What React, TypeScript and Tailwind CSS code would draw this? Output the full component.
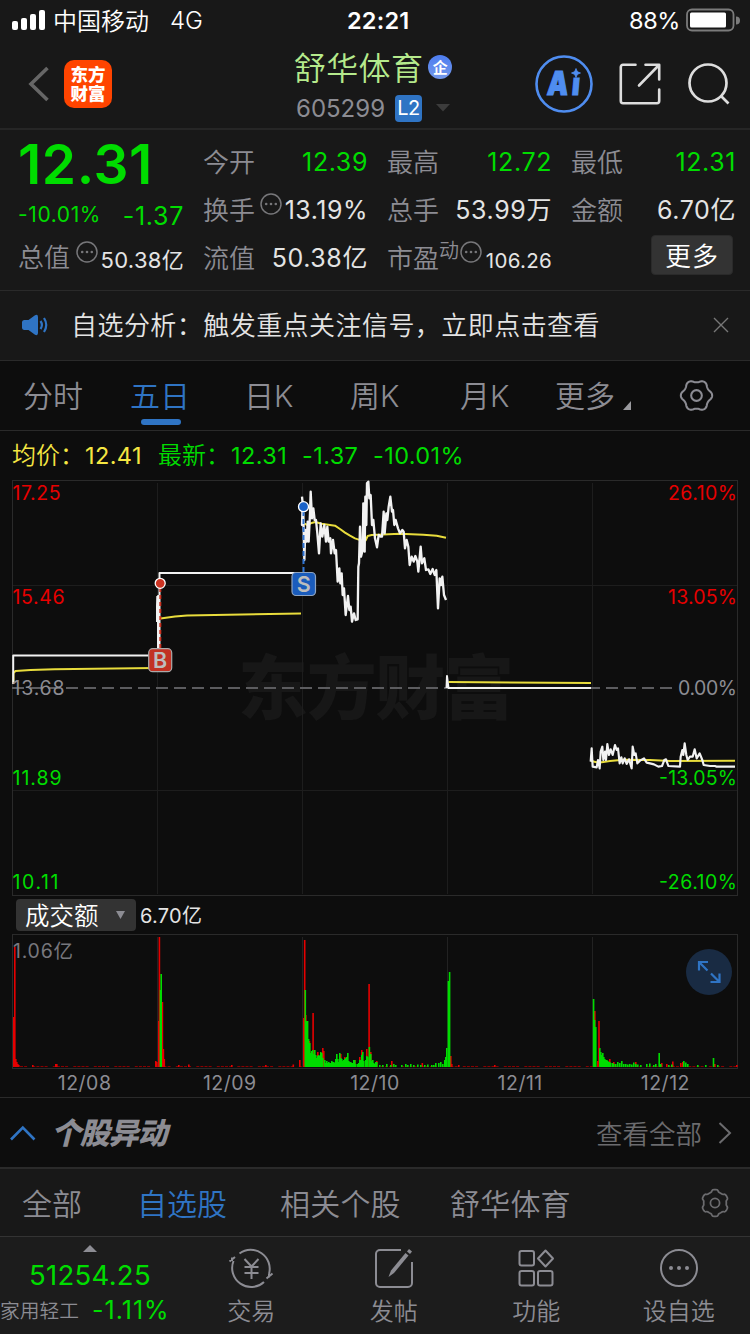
import React from "react";

const DATES = ["12/08", "12/09", "12/10", "12/11", "12/12"];

const DAY3_PRICE =
  "36,80 38,100 36,165 40,130 43,270 46,180 50,215 53,155 56,215 60,130 62,65 66,145 70,115 74,150 78,150 82,190 87,250 92,160 97,200 103,165 108,215 112,170 116,215 121,205 123,250 129,210 134,250 138,240 143,335 148,295 151,340 155,310 158,375 162,355 167,435 174,378 178,420 182,410 186,455 192,430 197,450 203,448 205,290 207,280 210,170 213,260 218,240 220,100 224,245 226,80 229,165 231,40 235,35 238,85 242,75 246,165 250,150 255,205 261,232 266,195 272,200 276,200 281,125 284,190 289,130 292,150 296,110 301,80 306,125 309,120 313,165 317,150 324,175 330,190 337,180 341,185 345,235 350,210 355,230 359,285 365,260 371,275 376,258 382,275 385,305 392,230 396,280 403,265 408,300 415,298 421,312 428,297 434,315 439,300 444,415 449,325 453,345 457,320 462,375 468,390";
const DAY3_AVG =
  "38,140 42,160 52,165 62,160 76,156 95,161 135,167 150,177 165,188 180,197 195,205 215,212 227,211 233,198 245,195 330,191 400,194 440,197 468,203";
const DAY5_PRICE =
  "422,365 425,325 428,380 440,382 444,360 449,385 452,335 457,320 460,360 465,335 468,360 472,312 477,345 482,328 488,345 495,315 500,330 504,325 509,370 514,352 518,370 524,355 530,372 537,358 545,385 548,320 553,345 557,340 562,370 570,362 582,355 590,368 600,370 612,373 625,380 636,378 643,360 648,358 655,378 690,380 692,350 697,330 700,345 704,310 709,345 713,360 720,350 728,350 734,328 740,355 749,340 757,360 761,375 780,378 795,378 800,380 855,380";
const DAY5_AVG = "422,362 445,368 480,363 520,359 600,360 660,363 855,362";

// [x, height] pairs, measured from the volume baseline.
const RED_BARS: number[][] = [
  [13, 50], [14, 120], [15, 8], [16, 5], [17, 3], [18, 2], [32, 2], [55, 3], [56, 3], [155, 6], [156, 5],
  [158, 46], [158.6, 130], [161.6, 65], [162.6, 18], [163.5, 8], [178, 2], [188, 2.5], [231, 2], [265, 2],
  [292.5, 2.5], [299, 7], [303, 49], [303.9, 127], [305, 52], [308.6, 26], [312.3, 54], [317, 15], [322, 19],
  [323, 16], [340, 13], [344, 10], [354, 7], [359, 10], [361, 17], [366, 18], [368.3, 83], [370, 15],
  [376, 6], [391, 6], [421.5, 4], [450, 11], [451, 3], [458, 2], [494, 2], [594, 56], [597, 6], [598.2, 46],
  [609, 8], [613, 5], [635, 5], [661, 4], [666, 3], [672, 5.5], [680, 4], [682, 5], [714, 3], [736, 2],
];
const GREEN_BARS: number[][] = [
  [160.4, 93], [159.6, 77], [304.5, 77], [305.8, 46], [306.8, 46], [307.8, 28], [309, 24], [310, 14], [311, 16],
  [312, 17], [313, 13], [314, 17], [315, 12], [316, 9], [317, 11], [318, 12], [319, 11], [320, 15], [321, 14],
  [322, 9], [324, 7], [325, 4], [326, 6], [327, 4], [328, 5], [329, 4], [330, 4], [331, 6], [332, 5], [333, 5],
  [334, 4], [335, 8], [336, 13], [337, 8], [338, 5], [339, 14], [340, 9], [341, 8], [342, 6], [343, 7], [344, 8],
  [345, 9], [346, 10], [347, 14], [348, 6], [349, 5], [350, 5], [351, 4], [352, 4], [353, 7], [354, 7], [355, 3],
  [357, 3], [358, 4], [359, 7], [360, 7], [361, 12], [362, 15], [363, 6], [365, 7], [366, 11], [367, 10],
  [368.6, 20], [370, 13], [371, 6], [372, 7], [373, 4], [374, 3], [375, 5], [376, 5], [379, 2], [382, 2],
  [386, 3], [390, 2], [393, 3], [395, 2], [401, 2], [405, 3], [407, 2], [410, 3], [413, 2], [417, 2.5],
  [420, 2], [424, 2], [427, 2.5], [431, 2], [433, 2], [435, 4], [438, 4], [440, 5], [442, 3], [444, 7],
  [445, 10], [446, 19], [447.6, 86], [448.8, 95], [592.8, 68], [593.8, 47], [595, 40], [599, 19], [600, 15],
  [601, 12], [602, 14], [603, 10], [604, 8], [605, 7], [606, 7], [607, 6], [608, 5], [609, 5], [610, 4],
  [612, 4], [613, 3], [615, 3], [617, 5], [619, 4], [621, 6], [623, 3], [625, 3], [627, 2.5], [629, 3],
  [631, 2.5], [633, 4.5], [635, 3], [637, 2.5], [640, 2], [646, 3], [649, 3.5], [653, 2], [655, 3], [658.4, 14],
  [660, 3], [668, 2], [671, 2.5], [683, 6], [685, 4.5], [687, 3], [697, 2], [705, 2], [712.7, 9], [717, 2],
];

const DARK_TICKS = Array.from({ length: 175 }, (_, i) => 20 + i * 4.1).filter((_, i) => i % 5 !== 2);

// Six-lobed gear outline; a higher sharpness gives squarer teeth.
function gearPoints(radius: number, depth: number, sharpness: number) {
  return Array.from({ length: 144 }, (_, i) => {
    const a = (i / 144) * Math.PI * 2;
    const wave = Math.tanh(sharpness * Math.cos(6 * a)) / Math.tanh(sharpness);
    const r = radius + depth * wave;
    return `${(17 + r * Math.cos(a)).toFixed(2)},${(17 + r * Math.sin(a)).toFixed(2)}`;
  }).join(" ");
}

function Gear({ className, sharpness }: { className: string; sharpness: number }) {
  return (
    <svg className={className} viewBox="0 0 34 34" fill="none" stroke="currentColor" strokeWidth="2" strokeLinejoin="round">
      <polygon points={gearPoints(14, 1.2, sharpness)} />
      <circle cx="17" cy="17" r="5.200" />
    </svg>
  );
}

function Dots({ className }: { className: string }) {
  return (
    <svg className={className} viewBox="0 0 22 22" fill="none">
      <circle cx="11" cy="11" r="10" stroke="#77777a" strokeWidth="1.500" />
      <g fill="#77777a">
        <circle cx="6.200" cy="11" r="1.300" />
        <circle cx="11" cy="11" r="1.300" />
        <circle cx="15.800" cy="11" r="1.300" />
      </g>
    </svg>
  );
}

function StatusBar() {
  return (
    <div className="flex h-10 items-center pl-3 text-white">
      <svg className="h-5 w-[34px] shrink-0" viewBox="0 0 34 20" fill="#fff">
        <rect x="0" y="11" width="6" height="9" rx="2" />
        <rect x="9" y="8" width="6" height="12" rx="2" />
        <rect x="18" y="4" width="6" height="16" rx="2" />
        <rect x="27" y="0" width="6" height="20" rx="2" />
      </svg>
      <span className="mt-[3px] ml-[7px] w-[117px] text-[24px]">中国移动</span>
      <span className="mt-[2px] w-[177px] text-[24px]">4G</span>
      <span className="mt-[2px] w-[282px] text-[23.500px] font-semibold tracking-[0.200px]">22:21</span>
      <span className="mt-[2px] w-[57px] text-[23.500px] font-normal tracking-[-0.400px]">88%</span>
      <svg className="h-[24px] w-[54px] shrink-0" viewBox="0 0 54 24">
        <rect x="1" y="1.500" width="46.500" height="21" rx="5" fill="none" stroke="#7b7b7b" strokeWidth="1.800" />
        <rect x="4" y="4.500" width="36" height="15" rx="1.500" fill="#fff" />
        <path d="M50 8.500a4 4 0 0 1 0 8z" fill="#7b7b7b" />
      </svg>
    </div>
  );
}

function Header() {
  return (
    <header className="flex h-[90px] items-center border-b-2 border-[#262626] pl-[28px]">
      <svg className="h-9 w-[22px] shrink-0" viewBox="0 0 22 36" fill="none" stroke="#666" strokeWidth="3.600">
        <path d="M19.500 2 3 18l16.500 16" />
      </svg>
      <div className="ml-[14px] flex h-12 w-12 shrink-0 flex-col items-center justify-center rounded-[10px] bg-[#ff4400] text-[17.500px] leading-[19px] font-black text-white">
        <span>东方</span>
        <span>财富</span>
      </div>
      <div className="ml-[182px] flex w-[241px] flex-col pt-[6px]">
        <div className="flex h-[42px] items-center">
          <span className="mt-[2px] text-[32px] tracking-[0.300px] text-[#b5ea8c]">舒华体育</span>
          <span className="mb-[1px] ml-[5px] flex h-6 w-6 items-center justify-center rounded-full bg-gradient-to-b from-[#4d7df0] to-[#7397ea] text-[15px] font-bold text-white">企</span>
        </div>
        <div className="flex h-[39px] items-center">
          <span className="mt-[1px] ml-[2px] w-[99px] text-[24px] font-normal text-[#8c8c93]">605299</span>
          <span className="flex h-[27px] w-[27px] items-center justify-center rounded-[4px] bg-[#2f74c4] text-[20px] font-normal tracking-[-0.500px] text-white">L2</span>
          <svg className="ml-[14px] h-[8px] w-[14px]" viewBox="0 0 14 8" fill="#3c3c3c">
            <path d="M0 0h14L7 7.500z" />
          </svg>
        </div>
      </div>
      <svg className="h-[58px] w-[58px] shrink-0" viewBox="0 0 58 58">
        <g transform="translate(11.500 39.500) skewX(-5) scale(.8 1)">
          <text x="0 31" fontSize="33" fontWeight="900" fill="#4f8df0" stroke="#4f8df0" strokeWidth="1.200">Ai</text>
        </g>
        <path d="M34 10h13v12.500H34z" fill="#181818" />
        <circle cx="29" cy="29" r="27.500" fill="none" stroke="#4f8df0" strokeWidth="2.600" />
        <path d="M41 13.500c.9 2.800 1.700 3.700 4.500 4.500-2.800.9-3.600 1.700-4.500 4.500-.9-2.800-1.700-3.600-4.500-4.500 2.800-.8 3.600-1.700 4.500-4.500z" fill="#4f8df0" stroke="#4f8df0" strokeWidth=".8" />
      </svg>
      <svg className="ml-[26px] h-[42px] w-[42px] shrink-0" viewBox="0 0 42 42" fill="none" stroke="#ddd" strokeWidth="2.600" strokeLinecap="round" strokeLinejoin="round">
        <path d="M16.500 1.800H4A2.200 2.200 0 0 0 1.800 4v34A2.200 2.200 0 0 0 4 40.200h34a2.200 2.200 0 0 0 2.200-2.200V26.500M26.500 1.800h13.700v14.700M40 2 20 22.500" />
      </svg>
      <svg className="ml-[26px] h-[44px] w-[44px] shrink-0" viewBox="0 0 44 44" fill="none" stroke="#ddd" strokeWidth="2.700">
        <circle cx="21" cy="21" r="18.500" />
        <path d="m33.500 33.500 8 8" />
      </svg>
    </header>
  );
}

function Cell({ label, value, green }: { label: string; value: string; green?: boolean }) {
  return (
    <div className="flex h-12 items-center justify-between">
      <span className="mt-[3px] text-[26px] text-[#8c8c93]">{label}</span>
      <span className={green ? "mt-[2px] text-[25px] font-normal tracking-[0.600px] text-[#00dc00]" : "mt-[2px] text-[25px] font-normal tracking-[0.600px] text-[#e4e4e4]"}>{value}</span>
    </div>
  );
}

function Quote() {
  return (
    <section className="flex h-[161px] gap-[19px] border-b border-[#2a2a2a] pt-[7px] pl-[18px]">
      <div className="w-[166px]">
        <div className="flex h-[54px] items-center text-[55px] font-semibold tracking-[0.600px] text-[#00dc00]">12.31</div>
        <div className="flex h-[46px] items-center justify-between font-normal text-[#00dc00]">
          <span className="text-[21px] tracking-[0.600px]">-10.01%</span>
          <span className="mt-[5px] text-[25px] tracking-[0.700px]">-1.37</span>
        </div>
        <div className="flex h-[40px] items-center">
          <span className="mt-[1px] text-[26px] text-[#8c8c93]">总值</span>
          <Dots className="mb-[10px] ml-[6px] h-[22px] w-[22px] shrink-0" />
          <span className="mt-[5px] ml-auto text-[22px] font-normal tracking-[0.300px] text-[#e4e4e4]">50.38亿</span>
        </div>
      </div>
      <div className="w-[165px]">
        <Cell label="今开" value="12.39" green />
        <div className="flex h-12 items-center">
          <span className="mt-[3px] text-[26px] text-[#8c8c93]">换手</span>
          <Dots className="mb-[10px] ml-[5px] h-[22px] w-[22px] shrink-0" />
          <span className="mt-[2px] ml-auto text-[25px] font-normal tracking-[0.500px] text-[#e4e4e4]">13.19%</span>
        </div>
        <Cell label="流值" value="50.38亿" />
      </div>
      <div className="w-[165px]">
        <Cell label="最高" value="12.72" green />
        <Cell label="总手" value="53.99万" />
        <div className="flex h-12 items-center">
          <span className="mt-[3px] text-[26px] text-[#8c8c93]">市盈</span>
          <span className="mb-[12px] text-[20px] text-[#8c8c93]">动</span>
          <Dots className="mb-[10px] ml-[1px] h-[22px] w-[22px] shrink-0" />
          <span className="mt-[9px] ml-auto text-[20.500px] font-normal tracking-[0.300px] text-[#e4e4e4]">106.26</span>
        </div>
      </div>
      <div className="w-[165px]">
        <Cell label="最低" value="12.31" green />
        <Cell label="金额" value="6.70亿" />
        <button className="mt-[2px] mr-[3px] ml-auto flex h-[40px] w-[82px] items-center justify-center rounded-[4px] border border-[#2a2a2a] bg-[#333] pt-[3px] text-[26px] tracking-[1px] text-white">更多</button>
      </div>
    </section>
  );
}

function Notice() {
  return (
    <section className="flex h-[70px] items-center border-b border-[#2a2a2a] pl-[22px]">
      <svg className="mb-[1px] h-[22px] w-[28px] shrink-0" viewBox="0 0 28 22">
        <path d="M2 6h4.500L13 1.200Q16 0 16 3v16q0 3-3 1.800L6.500 16H2q-2-.3-2-2V8q0-1.700 2-2z" fill="#2f74c4" />
        <path d="M18.500 7q2.800 4 0 8M22 4q4.500 7 0 14" fill="none" stroke="#2f74c4" strokeWidth="2.200" />
      </svg>
      <span className="mt-[1px] ml-[21px] w-[642px] text-[26px] tracking-[0.450px] text-[#e4e4e4]">自选分析：触发重点关注信号，立即点击查看</span>
      <svg className="mb-[1px] h-[16px] w-[16px] shrink-0" viewBox="0 0 16 16" stroke="#777" strokeWidth="1.400">
        <path d="m1 1 14 14M15 1 1 15" />
      </svg>
    </section>
  );
}

function PeriodTabs() {
  return (
    <nav className="flex h-[70px] items-center border-b border-[#2a2a2a] pl-[23px] text-[30px] text-[#8c8c93]">
      <span className="w-[107px]">分时</span>
      <span className="relative w-[114px] text-[#2f74c4]">
        五日
        <i className="absolute top-[38px] left-[11px] h-[6px] w-10 rounded-full bg-[#2f74c4]" />
      </span>
      <span className="w-[106px]">日K</span>
      <span className="w-[110px]">周K</span>
      <span className="w-[95px]">月K</span>
      <span className="w-[68px]">更多</span>
      <svg className="mt-[20px] h-[9px] w-[8px]" viewBox="0 0 8 9" fill="#9a9a9e">
        <path d="M8 0v9H0z" />
      </svg>
      <Gear className="ml-[48px] h-[35px] w-[35px]" sharpness={0.9} />
    </nav>
  );
}

function PriceChart() {
  return (
    <svg className="block h-[416px] w-[750px]" viewBox="0 480 750 416" fill="none">
      <g fill="#171717" fontSize="70" fontWeight="900">
        <text x="238" y="714" textLength="276">东方财富</text>
      </g>
      <g stroke="#1d1d1d" strokeWidth="1">
        <path d="M157.500 483v411M302.500 483v411M447.500 483v411M592.500 483v411M12 585.500h726M12 790.500h726" />
        <rect x="12.500" y="480.500" width="725" height="415" stroke="#2a2a2a" />
      </g>
      <path d="M12 688h666" stroke="#5c5c5f" strokeWidth="1.800" strokeDasharray="12 6" />
      <g stroke="#e8dc3c" strokeWidth="2" strokeLinejoin="round">
        <path d="M13.500 682v-9l2-2 15-1 24-.8 100-1.200" />
        <path d="M160.500 618.500 175 616.500l12-1 114-2" />
        <path d="M448.500 682l142.500 1" />
      </g>
      <g stroke="#f2f2f2" strokeWidth="2" strokeLinejoin="round">
        <path d="M13.200 684v-28.500H158" />
        <path d="M157 622v-16l1-10v64M159.500 655v-82H303" />
        <path d="M157.800 596v26" strokeWidth="3" />
        <path d="M446.500 688l.5-12 1.500 12H591" />
      </g>
      <g transform="translate(290 470) scale(.33333)" strokeLinejoin="round">
        <polyline points={DAY3_AVG} stroke="#e8dc3c" strokeWidth="6" />
        <polyline points={DAY3_PRICE} stroke="#f2f2f2" strokeWidth="7" />
      </g>
      <g transform="translate(450 640) scale(.33333)" strokeLinejoin="round">
        <polyline points={DAY5_AVG} stroke="#e8dc3c" strokeWidth="6" />
        <polyline points={DAY5_PRICE} stroke="#f2f2f2" strokeWidth="6.500" />
      </g>
      <path d="M160.300 588v62" stroke="#cc3322" strokeWidth="2" strokeDasharray="4 3" />
      <path d="M303.500 511v62" stroke="#2f74d4" strokeWidth="2" strokeDasharray="5 3" />
      <circle cx="160.200" cy="583.300" r="5" fill="#cc3322" stroke="#fff" strokeWidth="1.300" />
      <circle cx="303.500" cy="506.700" r="5" fill="#1a62c8" stroke="#fff" strokeWidth="1.300" />
      <rect x="148.700" y="648.700" width="23" height="23" rx="4" fill="#c23123" stroke="#aaa" strokeWidth="1.200" />
      <rect x="292" y="572.500" width="23.500" height="23" rx="4" fill="#1a5cbc" stroke="#8fa4c0" strokeWidth="1.200" />
      <g fontSize="21.500" fontWeight="600" fill="#bdbdbd" textAnchor="middle">
        <text x="160" y="668">B</text>
        <text x="303.700" y="591.800">S</text>
      </g>
      <g fontSize="19.500" fontWeight="400">
        <g fill="#e60000">
          <text x="12.500" y="500" textLength="48">17.25</text>
          <text x="12.500" y="604" textLength="52">15.46</text>
          <text x="668" y="500" textLength="69">26.10%</text>
          <text x="668" y="604" textLength="69">13.05%</text>
        </g>
        <g fill="#8c8c93">
          <text x="12.500" y="694.500" textLength="52">13.68</text>
          <text x="678" y="694.500" textLength="59">0.00%</text>
        </g>
        <g fill="#00dc00">
          <text x="12.500" y="784.500" textLength="49">11.89</text>
          <text x="12.500" y="888.500" textLength="46">10.11</text>
          <text x="659" y="784.500" textLength="78">-13.05%</text>
          <text x="659" y="888.500" textLength="78">-26.10%</text>
        </g>
      </g>
    </svg>
  );
}

function VolumeChart() {
  return (
    <div className="relative h-[135px] w-[750px]">
      <svg className="block h-[135px] w-[750px]" viewBox="0 934 750 135" fill="none">
        <path d="M157.500 937v130M302.500 937v130M447.500 937v130M592.500 937v130" stroke="#222" />
        <rect x="12.500" y="934.500" width="725" height="134" stroke="#2a2a2a" />
        {DARK_TICKS.map((x) => (
          <rect key={x} x={x} y="1066" width="3" height="1" fill="#8a0000" />
        ))}
        <text x="13" y="958" fontSize="19.500" fontWeight="400" fill="#77777d" textLength="60">1.06亿</text>
        {RED_BARS.map(([x, h]) => (
          <rect key={x} x={x} y={1067 - h} width="1.600" height={h} fill="#e60000" />
        ))}
        {GREEN_BARS.map(([x, h]) => (
          <rect key={x} x={x} y={1067 - h} width="1.600" height={h} fill="#00dc00" />
        ))}
      </svg>
      <button className="absolute top-[15px] left-[686px] flex h-[46px] w-[46px] items-center justify-center rounded-full bg-[#192b43]">
        <svg className="h-[24px] w-[24px]" viewBox="0 0 24 24" fill="none" stroke="#2f74c4" strokeWidth="2.200">
          <path d="M2 10.500V2h9M2 2l8.500 8.500M22.500 13.500V22h-9M22.500 22 14 13.500" />
        </svg>
      </button>
    </div>
  );
}

function NavItem({ label, children }: { label: string; children: React.ReactNode }) {
  return (
    <div className="flex w-[142.600px] flex-col items-center pt-[10px]">
      <svg className="h-[42px] w-[48px]" viewBox="0 0 48 42" fill="none" stroke="#8c8c93" strokeWidth="2" strokeLinejoin="round">
        {children}
      </svg>
      <span className="mt-[5px] text-[24px] leading-[36px] text-[#8c8c93]">{label}</span>
    </div>
  );
}

export default function App() {
  return (
    <div className="flex h-[1334px] w-[750px] flex-col overflow-hidden bg-[#0d0d0d] font-['Inter','Noto_Sans_CJK_SC',sans-serif] leading-none font-[350] whitespace-nowrap">
      <div className="bg-[#181818]">
        <StatusBar />
        <Header />
        <Quote />
        <Notice />
      </div>
      <PeriodTabs />
      <div className="flex h-[49px] items-center pt-[1px] pl-[12px] text-[23.500px] font-normal tracking-[0.400px] text-[#00dc00]">
        <span className="w-[73px] text-[24px] font-[350] tracking-normal text-[#f5e642]">均价：</span>
        <span className="w-[73px] text-[#f5e642]">12.41</span>
        <span className="w-[73px] text-[24px] font-[350] tracking-normal">最新：</span>
        <span className="w-[71px]">12.31</span>
        <span className="w-[71px]">-1.37</span>
        <span>-10.01%</span>
      </div>
      <PriceChart />
      <div className="flex h-[38px] items-center pl-4">
        <div className="flex h-8 w-[120px] items-center rounded-[4px] bg-[#333] pt-[3px] pl-[9px] text-[24.500px] text-white">
          成交额
          <svg className="mb-[4px] ml-[17px] h-[8px] w-[9px]" viewBox="0 0 9 8" fill="#8c8c93">
            <path d="M0 0h9L4.500 8z" />
          </svg>
        </div>
        <span className="mt-[2px] ml-[4px] text-[20px] font-normal tracking-[0.300px] text-[#e4e4e4]">6.70亿</span>
      </div>
      <VolumeChart />
      <div className="grid h-[29px] grid-cols-5 items-center border-b border-[#2a2a2a] pt-[2px] pr-[12px] pl-[12px] text-center text-[19.500px] font-normal tracking-[0.500px] text-[#8c8c93]">
        {DATES.map((d) => (
          <span key={d}>{d}</span>
        ))}
      </div>
      <section className="flex h-[71px] items-center border-b-2 border-[#2a2a2a] pl-[10px]">
        <svg className="h-[16px] w-[26px]" viewBox="0 0 26 16" fill="none" stroke="#2f74c4" strokeWidth="2.600">
          <path d="M1 14.500 12.800 2.500 24.500 14.500" />
        </svg>
        <h2 className="mt-[1px] ml-[15px] w-[545px] text-[30px] font-black tracking-[-1.200px] text-[#8c8c93] italic">个股异动</h2>
        <span className="mt-[3px] w-[122px] text-[26.500px] text-[#6b6b6e]">查看全部</span>
        <svg className="h-[22px] w-[14px]" viewBox="0 0 14 22" fill="none" stroke="#6b6b6e" strokeWidth="2">
          <path d="m1.500 1 10.500 10L1.500 21" />
        </svg>
      </section>
      <nav className="flex h-[68px] items-center border-b border-[#333] bg-[#181818] pl-[22px] text-[30px] text-[#8c8c93]">
        <span className="mt-[3px] w-[115px]">全部</span>
        <span className="mt-[3px] w-[143px] text-[#2f74c4]">自选股</span>
        <span className="mt-[3px] w-[170px] tracking-[0.200px]">相关个股</span>
        <span className="mt-[3px] w-[250px] tracking-[0.200px]">舒华体育</span>
        <Gear className="h-[30px] w-[30px] rotate-90 text-[#6b6b6e]" sharpness={2.5} />
      </nav>
      <footer className="flex h-[97px] bg-[#1c1c1c]">
        <div className="flex w-[180px] flex-col items-center pt-[8px]">
          <svg className="h-[7px] w-[14px]" viewBox="0 0 14 7" fill="#8c8c93">
            <path d="M7 0l7 7H0z" />
          </svg>
          <span className="mt-[9px] text-[27.500px] leading-[28px] font-normal tracking-[0.300px] text-[#00dc00]">51254.25</span>
          <div className="mt-[7px] flex h-[28px] w-full items-center">
            <span className="mt-[4px] w-[92px] text-[19.800px] text-[#8c8c93]">家用轻工</span>
            <span className="text-[25px] font-normal tracking-[1px] text-[#00dc00]">-1.11%</span>
          </div>
        </div>
        <NavItem label="交易">
          <path d="M12.500 6.500A19 19 0 0 1 42 27M37 35A19 19 0 0 1 6.500 14M2.500 14.500l5.500-4.500M5 14V10.500M45.500 26.500 39.500 31.500M42 27v3.500" />
          <path d="m17.500 12 7 7.500 7-7.500M24.500 19.500V32M17.500 20h14M17.500 26h14" />
        </NavItem>
        <NavItem label="发帖">
          <path d="M31 3H10a4 4 0 0 0-4 4v29a4 4 0 0 0 4 4h28a4 4 0 0 0 4-4V15" />
          <path d="M38.500 8.500 24 26l-5.500 4 2.500-6.500L35.500 6z" fill="#8c8c93" stroke="none" />
          <path d="m37 4.500 2-2.500 3 2.500-2 2.500z" fill="#8c8c93" stroke="none" />
        </NavItem>
        <NavItem label="功能">
          <rect x="7.500" y="4" width="14.500" height="14.500" rx="2" />
          <rect x="7.500" y="24" width="14.500" height="14.500" rx="2" />
          <rect x="26" y="24" width="14.500" height="14.500" rx="2" />
          <path d="m33.500 3.500 7.500 8-7.500 8-7.500-8z" />
        </NavItem>
        <NavItem label="设自选">
          <circle cx="24" cy="21" r="18" />
          <g fill="#8c8c93" stroke="none">
            <circle cx="16" cy="21" r="2" />
            <circle cx="24" cy="21" r="2" />
            <circle cx="32" cy="21" r="2" />
          </g>
        </NavItem>
      </footer>
    </div>
  );
}
